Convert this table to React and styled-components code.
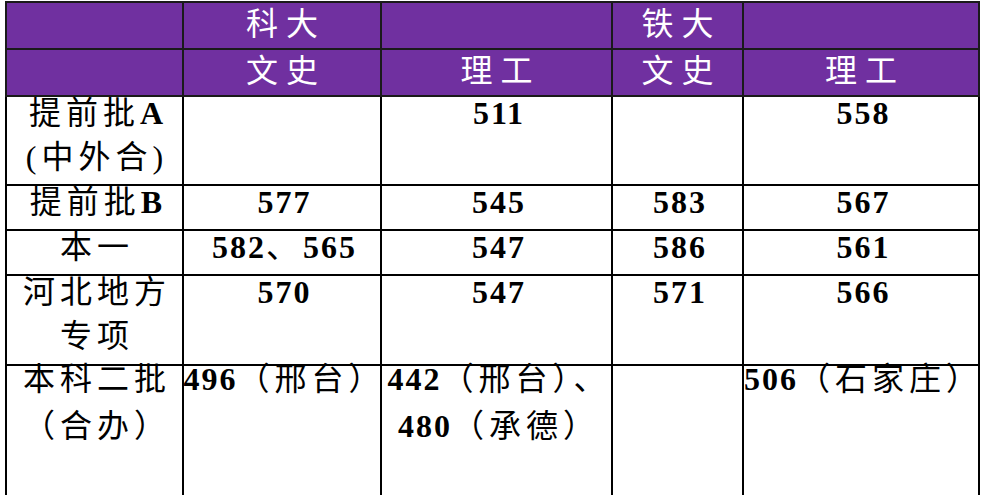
import styled, { createGlobalStyle } from "styled-components";

const GlobalStyle = createGlobalStyle`
  html, body {
    margin: 0;
    padding: 0;
    background: #fff;
  }
  body {
    font-family: "Liberation Serif", "Noto Sans CJK SC", serif;
  }
`;

const Page = styled.div`
  padding: 1px 0 0 5px;
`;

const Table = styled.table`
  border-collapse: collapse;
  table-layout: fixed;
  width: 973px;
  font-size: 32px;
  color: #000;
`;

const HeadCell = styled.th`
  background: #7030a0;
  color: #fff;
  border: 2px solid #1a1a1a;
  font-weight: normal;
  letter-spacing: 8px;
  padding: 0 0 3px 8px;
  line-height: 42px;
  vertical-align: middle;
  text-align: center;
`;

const Cell = styled.td`
  border: 2px solid #000;
  padding: 0;
  vertical-align: top;
`;

const Lines = styled.div`
  display: flex;
  flex-direction: column;
  align-items: center;
  overflow: hidden;
  width: 100%;
  letter-spacing: 5px;
  margin-top: ${(p) => p.$offset}px;
`;

const Line = styled.div`
  white-space: nowrap;
  line-height: ${(p) => p.$lh || 44}px;
  padding-left: 5px;
`;

const Num = styled.span`
  font-weight: bold;
  letter-spacing: 2px;
`;

const widths = [177, 198, 231, 131, 236];

const rows = [
  {
    h: 89,
    cells: [
      [<>提前批<Num>A</Num></>, "(中外合)"],
      [],
      [<Num>511</Num>],
      [],
      [<Num>558</Num>],
    ],
  },
  {
    h: 45,
    cells: [
      [<>提前批<Num>B</Num></>],
      [<Num>577</Num>],
      [<Num>545</Num>],
      [<Num>583</Num>],
      [<Num>567</Num>],
    ],
  },
  {
    h: 45,
    cells: [
      ["本一"],
      [<><Num>582</Num>、<Num>565</Num></>],
      [<Num>547</Num>],
      [<Num>586</Num>],
      [<Num>561</Num>],
    ],
  },
  {
    h: 90,
    cells: [
      ["河北地方", "专项"],
      [<Num>570</Num>],
      [<Num>547</Num>],
      [<Num>571</Num>],
      [<Num>566</Num>],
    ],
  },
  {
    h: 134,
    lh: 47,
    offset: -10,
    cells: [
      ["本科二批", "（合办）"],
      [<><Num>496</Num>（邢台）</>],
      [<><Num>442</Num>（邢台）、</>, <><Num>480</Num>（承德）</>],
      [],
      [<><Num>506</Num>（石家庄）</>],
    ],
  },
];

export default function App() {
  return (
    <Page>
      <GlobalStyle />
      <Table>
        <colgroup>
          {widths.map((w, i) => (
            <col key={i} style={{ width: w }} />
          ))}
        </colgroup>
        <thead>
          <tr style={{ height: 45 }}>
            <HeadCell />
            <HeadCell>科大</HeadCell>
            <HeadCell />
            <HeadCell>铁大</HeadCell>
            <HeadCell />
          </tr>
          <tr style={{ height: 45 }}>
            <HeadCell />
            <HeadCell>文史</HeadCell>
            <HeadCell>理工</HeadCell>
            <HeadCell>文史</HeadCell>
            <HeadCell>理工</HeadCell>
          </tr>
        </thead>
        <tbody>
          {rows.map((row, r) => (
            <tr key={r} style={{ height: row.h }}>
              {row.cells.map((lines, c) => (
                <Cell key={c}>
                  <Lines $offset={row.offset ?? -6}>
                    {lines.map((l, k) => (
                      <Line key={k} $lh={row.lh}>
                        {l}
                      </Line>
                    ))}
                  </Lines>
                </Cell>
              ))}
            </tr>
          ))}
        </tbody>
      </Table>
    </Page>
  );
}
